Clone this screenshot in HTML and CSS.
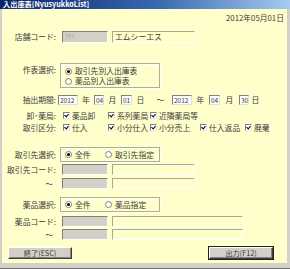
FILE: index.html
```html
<!DOCTYPE html>
<html lang="ja">
<head>
    <meta charset="UTF-8">
    <title>入出庫表[NyusyukkoList]</title>
    <link rel="stylesheet" href="styles.css">
</head>
<body>
    <div class="window">
        <div class="titlebar">入出庫表[NyusyukkoList]</div>

        <div class="client">
            <div class="date-row">2012年05月01日</div>

            <!-- 店舗 -->
            <div class="row row-store">
                <span class="label">店舗コード:</span>
                <span class="code-box">ｱｸﾘ</span>
                <span class="name-box">エムシーエス</span>
            </div>

            <!-- 作表選択 -->
            <div class="row row-report">
                <span class="label">作表選択:</span>
                <div class="group group-report">
                    <div class="opt"><span class="radio on"></span>取引先別入出庫表</div>
                    <div class="opt"><span class="radio"></span>薬品別入出庫表</div>
                </div>
            </div>

            <!-- 抽出期間 -->
            <div class="row row-period">
                <span class="label">抽出期間:</span>
                <span class="num-box w20">2012</span><span class="unit u-year">年</span>
                <span class="num-box w10">04</span><span class="unit u-month">月</span>
                <span class="num-box w11">01</span><span class="unit u-day">日</span>
                <span class="unit u-tilde">～</span>
                <span class="num-box w20">2012</span><span class="unit u-year2">年</span>
                <span class="num-box w11">04</span><span class="unit u-month2">月</span>
                <span class="num-box w10">30</span><span class="unit u-day2">日</span>
            </div>

            <!-- 卸・薬局 -->
            <div class="row row-check first">
                <span class="label">卸･薬局:</span>
                <div class="checks">
                    <span class="chk c1"><span class="box"></span>薬品卸</span>
                    <span class="chk c2"><span class="box"></span>系列薬局</span>
                    <span class="chk c3"><span class="box"></span>近隣薬局等</span>
                </div>
            </div>

            <!-- 取引区分 -->
            <div class="row row-check">
                <span class="label">取引区分:</span>
                <div class="checks">
                    <span class="chk c1"><span class="box"></span>仕入</span>
                    <span class="chk c2"><span class="box"></span>小分仕入</span>
                    <span class="chk c3"><span class="box"></span>小分売上</span>
                    <span class="chk c4"><span class="box"></span>仕入返品</span>
                    <span class="chk c5"><span class="box"></span>廃棄</span>
                </div>
            </div>

            <!-- 取引先 -->
            <div class="row row-select sel-supplier">
                <span class="label">取引先選択:</span>
                <div class="group group-inline">
                    <span class="opt o1"><span class="radio on"></span>全件</span>
                    <span class="opt"><span class="radio"></span>取引先指定</span>
                </div>
            </div>
            <div class="row row-code">
                <span class="label">取引先コード:</span>
                <span class="code-box"></span>
                <span class="name-box"></span>
            </div>
            <div class="row row-code row-to">
                <span class="label">～</span>
                <span class="code-box"></span>
                <span class="name-box"></span>
            </div>

            <!-- 薬品 -->
            <div class="row row-select sel-drug">
                <span class="label">薬品選択:</span>
                <div class="group group-inline">
                    <span class="opt o1"><span class="radio on"></span>全件</span>
                    <span class="opt"><span class="radio"></span>薬品指定</span>
                </div>
            </div>
            <div class="row row-code drug-code">
                <span class="label">薬品コード:</span>
                <span class="code-box"></span>
                <span class="name-box wide"></span>
            </div>
            <div class="row row-code drug-to">
                <span class="label">～</span>
                <span class="code-box"></span>
                <span class="name-box wide"></span>
            </div>

            <div class="buttons">
                <button class="btn">終了(ESC)</button>
                <button class="btn default">出力(F12)</button>
            </div>
        </div>
    </div>
</body>
</html>
```

FILE: styles.css
```css
* {
    margin: 0;
    padding: 0;
    box-sizing: border-box;
}

body {
    width: 290px;
    height: 269px;
    overflow: hidden;
    font-family: 'Noto Sans CJK JP', 'DejaVu Sans', sans-serif;
    font-size: 7.8px;
    line-height: 10px;
    color: #3a3a3a;
}

.window {
    width: 290px;
    height: 269px;
    display: flex;
    flex-direction: column;
    background: #d4d0c8;
    padding: 0 3px 5px 2px;
    border-bottom: 1px solid #707070;
}

.titlebar {
    height: 9px;
    margin: 0 -3px 0 -2px;
    padding-left: 3px;
    background: linear-gradient(to right, #0a246a, #3a6ab0 55%, #a6caf0);
    color: #fff;
    font-weight: bold;
    font-size: 7.2px;
    line-height: 9px;
    white-space: nowrap;
}

.client {
    flex: 1;
    background: #ffffcc;
    padding-top: 4px;
    display: flex;
    flex-direction: column;
}

.date-row {
    height: 10px;
    text-align: right;
    padding-right: 3px;
}

.row {
    display: flex;
    align-items: center;
}

.label {
    width: 56px;
    padding-right: 2px;
    text-align: right;
    white-space: nowrap;
    flex-shrink: 0;
}

/* 店舗 */
.row-store {
    height: 12px;
    margin-top: 8px;
}

.code-box {
    width: 46px;
    height: 100%;
    margin-left: 4px;
    background: #d4d0c8;
    border: 1px solid;
    border-color: #808080 #ffffff #ffffff #808080;
    color: #a0a0a0;
    font-size: 6.5px;
    line-height: 9px;
    padding-left: 2px;
}

.name-box {
    width: 83px;
    height: 100%;
    margin-left: 4px;
    border: 1px solid;
    border-color: #a8a898 #ffffff #ffffff #a8a898;
    line-height: 10px;
    padding-left: 2px;
}

.name-box.wide {
    width: 131px;
}

/* 作表選択 */
.row-report {
    margin-top: 20px;
    align-items: flex-start;
}

.row-report .label {
    margin-top: 2px;
}

.group {
    margin-left: 2px;
    width: 100px;
    border: 1px solid #b0ac9c;
    box-shadow: inset 1px 1px 0 #fff, 1px 1px 0 #fff;
}

.group-report {
    height: 25px;
    padding: 2px 0 0 4px;
}

.group-report .opt {
    height: 10px;
    display: flex;
    align-items: center;
    white-space: nowrap;
}

.radio {
    width: 7px;
    height: 7px;
    border-radius: 50%;
    background: #fff;
    border: 1px solid #808080;
    margin-right: 3px;
    flex-shrink: 0;
    display: flex;
    align-items: center;
    justify-content: center;
}

.radio.on::after {
    content: '';
    width: 3px;
    height: 3px;
    border-radius: 50%;
    background: #000;
}

/* 抽出期間 */
.row-period {
    height: 10px;
    margin-top: 7px;
}

.num-box {
    height: 10px;
    background: #fff;
    border: 1px solid;
    border-color: #808080 #e0e0e0 #e0e0e0 #808080;
    font-size: 6.5px;
    line-height: 8px;
    padding-left: 1px;
    white-space: nowrap;
}

.row-period .num-box:first-of-type {
    margin-left: 4px;
}

.w20 { width: 20px; }
.w11 { width: 11px; }
.w10 { width: 10px; }

.unit {
    text-align: center;
}

.u-year { width: 16px; }
.u-month { width: 17px; }
.u-day { width: 17px; }
.u-tilde { width: 23px; }
.u-year2 { width: 17px; }
.u-month2 { width: 19px; }
.u-day2 { width: 13px; }

/* チェック */
.row-check {
    height: 11px;
    margin-top: 1px;
}

.row-check.first {
    margin-top: 5px;
}

.checks {
    display: flex;
    margin-left: 5px;
}

.chk {
    display: flex;
    align-items: center;
    white-space: nowrap;
}

.c1 { width: 45px; }
.c2 { width: 42px; }
.c3 { width: 50px; }
.c4 { width: 45px; }

.box {
    width: 7px;
    height: 7px;
    margin-right: 2px;
    background: #fff;
    border: 1px solid;
    border-color: #808080 #e8e8e8 #e8e8e8 #808080;
    position: relative;
    flex-shrink: 0;
}

.box::after {
    content: '';
    position: absolute;
    left: 1px;
    top: 0;
    width: 2px;
    height: 3px;
    border: solid #000;
    border-width: 0 1px 1px 0;
    transform: rotate(40deg);
}

/* 選択 */
.row-select {
    height: 15px;
}

.sel-supplier {
    margin-top: 14px;
}

.sel-drug {
    margin-top: 8px;
}

.group-inline {
    height: 15px;
    display: flex;
    align-items: center;
    padding-left: 4px;
}

.group-inline .opt {
    display: flex;
    align-items: center;
    white-space: nowrap;
}

.group-inline .o1 {
    width: 40px;
}

/* コード */
.row-code {
    height: 11px;
    margin-top: 2px;
}

.row-to {
    margin-top: 3px;
}

.row-to .label,
.drug-to .label {
    padding-right: 5px;
}

.drug-code {
    margin-top: 4px;
}

.drug-to {
    margin-top: 2px;
}

/* ボタン */
.buttons {
    margin-top: 7px;
    display: flex;
    justify-content: space-between;
    padding: 0 14px 0 6px;
}

.btn {
    width: 64px;
    height: 12px;
    background: #d4d0c8;
    border: 1px solid;
    border-color: #ffffff #404040 #404040 #ffffff;
    box-shadow: inset -1px -1px 0 #808080;
    font-family: 'Noto Sans CJK JP', 'DejaVu Sans', sans-serif;
    font-size: 7.2px;
    line-height: 9px;
    color: #3a3a3a;
}

.btn.default {
    outline: 1px solid #202020;
}
```
